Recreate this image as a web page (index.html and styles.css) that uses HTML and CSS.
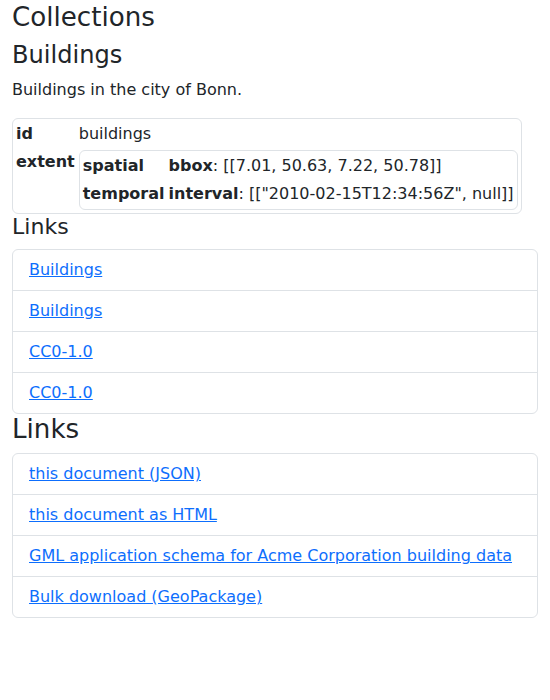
FILE: index.html
```html
<!DOCTYPE html>
<html>
<head>
<meta charset="utf-8">
<link rel="stylesheet" href="styles.css">
</head>
<body>
<div class="container">
  <h2 class="title">Collections</h2>
  <h3 class="subtitle">Buildings</h3>
  <p class="desc">Buildings in the city of Bonn.</p>
  <table class="kv">
    <tr><th>id</th><td>buildings</td></tr>
    <tr><th>extent</th><td>
      <table class="kv">
        <tr><th>spatial</th><td><b>bbox</b>: [[7.01, 50.63, 7.22, 50.78]]</td></tr>
        <tr><th>temporal</th><td><b>interval</b>: [["2010-02-15T12:34:56Z", null]]</td></tr>
      </table>
    </td></tr>
  </table>
  <h4 class="links-small">Links</h4>
  <ul class="list-group">
    <li class="list-item"><a href="#">Buildings</a></li>
    <li class="list-item"><a href="#">Buildings</a></li>
    <li class="list-item"><a href="#">CC0-1.0</a></li>
    <li class="list-item"><a href="#">CC0-1.0</a></li>
  </ul>
  <h2 class="links-big">Links</h2>
  <ul class="list-group">
    <li class="list-item"><a href="#">this document (JSON)</a></li>
    <li class="list-item"><a href="#">this document as HTML</a></li>
    <li class="list-item"><a href="#">GML application schema for Acme Corporation building data</a></li>
    <li class="list-item"><a href="#">Bulk download (GeoPackage)</a></li>
  </ul>
</div>
</body>
</html>
```

FILE: styles.css
```css
* { box-sizing: border-box; }
html, body { margin: 0; padding: 0; background: #fff; }
body {
  font-family: "DejaVu Sans", sans-serif;
  font-size: 16px;
  line-height: 1.5;
  color: #212529;
}
.container { padding: 2px 12px 0 12px; }
h2, h3, h4 {
  margin: 0 0 8px 0;
  font-weight: 500;
  line-height: 1.2;
}
.title { font-size: 26.15px; }
.subtitle { font-size: 24.1px; }
.links-small { font-size: 22.05px; }
.links-big { font-size: 26.15px; }
.desc { margin: 0 0 16px 0; }
.kv {
  border: 1px solid #dee2e6;
  border-radius: 6px;
  border-collapse: separate;
  border-spacing: 2px;
  margin: 0;
}
.kv th, .kv td {
  padding: 1px;
  vertical-align: top;
  text-align: left;
}
.kv th { font-weight: 700; }
.list-group {
  list-style: none;
  margin: 0;
  padding: 0;
  border: 1px solid #dee2e6;
  border-radius: 6px;
}
.list-item {
  padding: 8px 16px;
  border-top: 1px solid #dee2e6;
}
.list-item:first-child { border-top: none; }
a { color: #0d6efd; text-decoration: underline; }
```
